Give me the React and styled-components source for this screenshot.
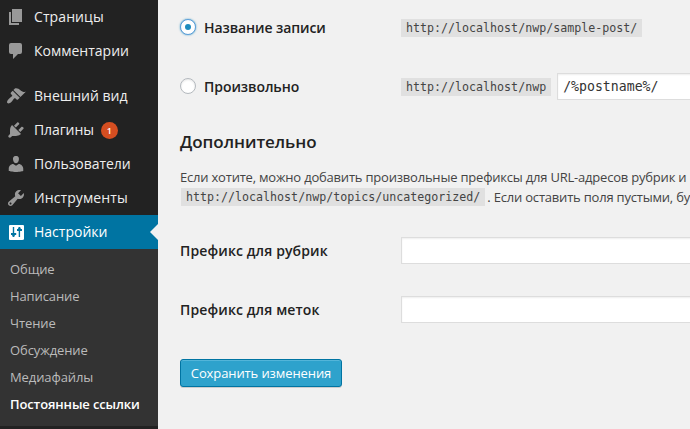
import React from "react";
import styled, { createGlobalStyle, css } from "styled-components";

const GlobalStyle = createGlobalStyle`
  *, *::before, *::after { box-sizing: border-box; }
  body {
    margin: 0;
    overflow: hidden;
    background: #f1f1f1;
    color: #444;
    font: 13px/20px "Open Sans", sans-serif;
  }
`;

const Page = styled.div`
  display: flex;
  height: 429px;
  overflow: hidden;
`;

const Sidebar = styled.nav`
  flex: 0 0 158px;
  background: #222;
`;

const MenuItem = styled.div`
  position: relative;
  display: flex;
  align-items: center;
  height: 34px;
  margin-top: ${(p) => (p.$separated ? "11px" : "0")};
  color: ${(p) => (p.$current ? "#fff" : "#eee")};
  background: ${(p) => (p.$current ? "#0074a2" : "transparent")};
  font-size: 14px;
  line-height: 18px;
  white-space: nowrap;
`;

const MenuLabel = styled.span`
  letter-spacing: ${(p) => p.$tracking || "0"};
`;

const MenuIcon = styled.svg`
  flex: none;
  width: 20px;
  height: 20px;
  margin: 0 8px 0 6px;
  fill: ${(p) => (p.$current ? "#fff" : "#999")};
`;

const MenuArrow = styled.span`
  position: absolute;
  right: 0;
  top: 9px;
  border: 8px solid transparent;
  border-left: 0;
  border-right-color: #f1f1f1;
`;

const Badge = styled.span`
  width: 17px;
  height: 17px;
  margin-left: 7px;
  border-radius: 50%;
  background: #d54e21;
  color: #fff;
  font-size: 9px;
  font-weight: 600;
  line-height: 17px;
  text-align: center;
`;

const Submenu = styled.div`
  height: 177px;
  padding: 7px 0 8px;
  background: #333;
`;

const SubmenuItem = styled.div`
  height: 27px;
  padding-left: 10px;
  font-size: 13px;
  line-height: 27px;
  white-space: nowrap;
  color: ${(p) => (p.$current ? "#fff" : "#bbb")};
  font-weight: ${(p) => (p.$current ? 600 : 400)};
  letter-spacing: ${(p) => (p.$current ? "-0.12px" : "-0.1px")};
`;

const Content = styled.main`
  flex: 1;
  min-width: 0;
  padding-left: 22px;
`;

const FormRow = styled.div`
  display: grid;
  grid-template-columns: 221px 1fr;
  align-items: center;
  height: 59px;
`;

const OptionRows = styled.section`
  margin-top: -2px;
`;

const RowLabel = styled.label`
  display: flex;
  align-items: center;
  color: #222;
  font-size: 14px;
  font-weight: 600;
  line-height: 18px;
  letter-spacing: ${(p) => p.$tracking || "0"};
`;

const Radio = styled.span`
  display: flex;
  align-items: center;
  justify-content: center;
  width: 16px;
  height: 16px;
  margin: -2px 8px 0 0;
  border: 1px solid #b4b9be;
  border-radius: 50%;
  background: #fff;
  box-shadow: inset 0 1px 2px rgba(0, 0, 0, 0.1);
  ${(p) =>
    p.$checked &&
    css`
      border-color: #5b9dd9;
      box-shadow: 0 0 2px rgba(30, 140, 190, 0.8);
      &::before {
        content: "";
        width: 6px;
        height: 6px;
        border-radius: 50%;
        background: #1e8cbe;
      }
    `}
`;

const FieldCell = styled.div`
  display: flex;
  align-items: center;
  min-width: 0;
`;

const Code = styled.code`
  display: inline-block;
  height: 18px;
  padding: 0 5px;
  background: #e0e0e0;
  color: #444;
  font: 11.65px/18px "DejaVu Sans Mono", monospace;
  white-space: nowrap;
`;

const TextInput = styled.input`
  flex: none;
  width: 350px;
  height: 27px;
  margin: 0;
  margin-left: ${(p) => (p.$afterCode ? "6px" : "0")};
  padding: 3px 5px;
  border: 1px solid #ddd;
  border-radius: 0;
  outline: none;
  background: #fff;
  box-shadow: inset 0 1px 2px rgba(0, 0, 0, 0.07);
  color: #333;
  font: 13.2px/19px "DejaVu Sans Mono", monospace;
`;

const Heading = styled.h3`
  margin: 15px 0 0;
  color: #222;
  font-size: 17px;
  font-weight: 600;
  line-height: 22px;
  letter-spacing: -0.05px;
`;

const Description = styled.div`
  margin: 14px 0 14px;
  white-space: nowrap;
`;

const DescriptionLine = styled.div`
  display: flex;
  align-items: center;
  height: 20px;
  letter-spacing: -0.205px;
`;

const AfterCode = styled.span`
  margin-left: 2px;
`;

const LinkCode = styled(Code)`
  margin-left: 1px;
  letter-spacing: 0;
`;

const SubmitButton = styled.button`
  display: block;
  width: 162px;
  height: 28px;
  margin: 20px 0 0;
  padding: 0 0 1px;
  border: 1px solid #0074a2;
  border-radius: 3px;
  background: #2ea2cc;
  box-shadow: inset 0 1px 0 rgba(120, 200, 230, 0.5), 0 1px 0 rgba(0, 0, 0, 0.15);
  color: #fff;
  font: 13px/26px "Open Sans", sans-serif;
  letter-spacing: -0.1px;
  white-space: nowrap;
`;

const icons = {
  pages: <path d="M6 15V2h10v13H6zM5 16h8v2H3V5h2v11z" />,
  comments: <path d="M5 2h9q2 0 2 2v7q0 2-2 2h-2l-5 5v-5H5q-2 0-2-2V4q0-2 2-2z" />,
  appearance: (
    <path d="M14.48 11.06 7.41 3.99l1.5-1.5c.5-.56 2.3-.47 3.51.32 1.21.8 1.43 1.28 2.91 2.1 1.18.64 2.45 1.26 4.45.85l-5.3 5.3zm-.71.71L6.7 4.7 4.93 6.47c-.39.39-.39 1.02 0 1.41l1.06 1.06c.39.39.39 1.03 0 1.42-.6.6-1.43 1.11-2.21 1.69-.35.26-.7.53-1.01.84C1.43 14.23.4 16.08 1.4 17.07c.99 1 2.84-.03 4.18-1.36.31-.31.58-.66.85-1.02.57-.78 1.08-1.61 1.69-2.21.39-.39 1.02-.39 1.41 0l1.06 1.06c.39.39 1.02.39 1.41 0l1.77-1.77z" />
  ),
  plugins: (
    <path d="M13.11 4.36 9.87 7.6 8 5.73l3.24-3.24c.35-.34 1.05-.2 1.56.32.52.51.66 1.21.31 1.55zm-8 1.77.91-1.12 9.01 9.01-1.19.84c-.71.71-2.63 1.16-3.82 1.16H6.14L4.9 17.26c-.59.59-1.54.59-2.12 0-.59-.58-.59-1.53 0-2.12l1.24-1.24v-3.88c0-1.13.4-3.19 1.09-3.89zm7.26 3.97 3.24-3.24c.34-.35 1.04-.21 1.55.31.52.51.66 1.21.31 1.55l-3.24 3.25-1.86-1.87z" />
  ),
  users: (
    <path d="M10 9.25C7.73 9.25 7.13 6 7.13 6 6.69 4 7.32 2 9.98 2c2.68 0 3.28 2 2.85 4 0 0-.57 3.25-2.83 3.25zm0 2.57L12.72 10c2.39 0 4.52 2.33 4.52 4.53v2.49S13.59 18 10 18c-3.65 0-7.25-.98-7.25-.98v-2.49C2.75 12.28 4.67 10.05 7.2 10L10 11.82z" />
  ),
  tools: (
    <path d="M16.68 9.77c-1.34 1.34-3.3 1.67-4.95.99l-5.41 6.52c-.99.99-2.59.99-3.58 0s-.99-2.59 0-3.57l6.52-5.42c-.68-1.65-.35-3.61.99-4.95 1.28-1.28 3.12-1.62 4.72-1.06l-2.89 2.89 2.82 2.82 2.86-2.87c.53 1.58.18 3.39-1.08 4.65zM3.81 16.21c.4.39 1.04.39 1.43 0 .4-.4.4-1.04 0-1.43-.39-.4-1.03-.4-1.43 0-.39.39-.39 1.03 0 1.43z" />
  ),
  settings: (
    <path
      fillRule="evenodd"
      d="M17 3H4q-1 0-1 1v13q0 1 1 1h12q2 0 2-1V4q0-1-1-1zM6.8 5h1.4v6h2v2H9l-.8 2H6.800l-.8-2H5v-2h1.800V5zm5.900 0h1.400l.8 2H16v2h-1.900v6h-1.400V9H11V7h.9z"
    />
  ),
};

const menuItems = [
  { label: "Страницы", icon: "pages", tracking: "0.1px" },
  { label: "Комментарии", icon: "comments" },
  { label: "Внешний вид", icon: "appearance", separated: true },
  { label: "Плагины", icon: "plugins", badge: 1, tracking: "-0.1px" },
  { label: "Пользователи", icon: "users", tracking: "-0.06px" },
  { label: "Инструменты", icon: "tools", tracking: "0.1px" },
  { label: "Настройки", icon: "settings", current: true },
];

const submenuItems = [
  "Общие",
  "Написание",
  "Чтение",
  "Обсуждение",
  "Медиафайлы",
  "Постоянные ссылки",
];

export default function App() {
  return (
    <>
      <GlobalStyle />
      <Page>
        <Sidebar>
          {menuItems.map((item) => (
            <MenuItem key={item.label} $current={item.current} $separated={item.separated}>
              <MenuIcon viewBox="0 0 20 20" $current={item.current}>
                {icons[item.icon]}
              </MenuIcon>
              <MenuLabel $tracking={item.tracking}>{item.label}</MenuLabel>
              {item.badge && <Badge>{item.badge}</Badge>}
              {item.current && <MenuArrow />}
            </MenuItem>
          ))}
          <Submenu>
            {submenuItems.map((label, i) => (
              <SubmenuItem key={label} $current={i === submenuItems.length - 1}>
                {label}
              </SubmenuItem>
            ))}
          </Submenu>
        </Sidebar>
        <Content>
          <OptionRows>
            <FormRow>
              <RowLabel $tracking="-0.08px">
                <Radio $checked />
                Название записи
              </RowLabel>
              <FieldCell>
                <Code>http://localhost/nwp/sample-post/</Code>
              </FieldCell>
            </FormRow>
            <FormRow>
              <RowLabel $tracking="-0.06px">
                <Radio />
                Произвольно
              </RowLabel>
              <FieldCell>
                <Code>http://localhost/nwp</Code>
                <TextInput $afterCode defaultValue="/%postname%/" />
              </FieldCell>
            </FormRow>
          </OptionRows>
          <Heading>Дополнительно</Heading>
          <Description>
            <DescriptionLine>
              Если хотите, можно добавить произвольные префиксы для URL-адресов рубрик и
            </DescriptionLine>
            <DescriptionLine>
              <LinkCode>http://localhost/nwp/topics/uncategorized/</LinkCode>
              <AfterCode>. Если оставить поля пустыми, бу</AfterCode>
            </DescriptionLine>
          </Description>
          <FormRow>
            <RowLabel $tracking="0.12px">Префикс для рубрик</RowLabel>
            <TextInput />
          </FormRow>
          <FormRow>
            <RowLabel $tracking="0.12px">Префикс для меток</RowLabel>
            <TextInput />
          </FormRow>
          <SubmitButton>Сохранить изменения</SubmitButton>
        </Content>
      </Page>
    </>
  );
}
